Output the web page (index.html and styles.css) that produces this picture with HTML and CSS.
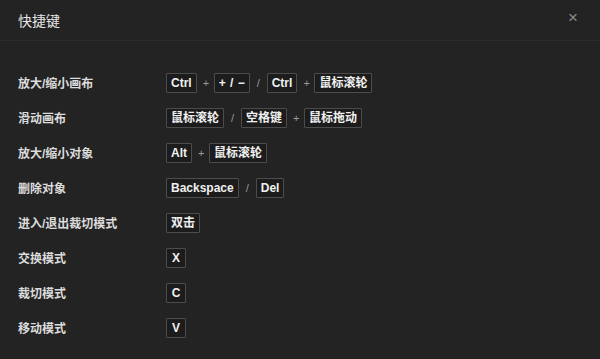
FILE: index.html
```html
<!DOCTYPE html>
<html lang="zh-CN">
<head>
  <meta charset="UTF-8" />
  <title>快捷键</title>
  <link rel="stylesheet" href="styles.css">
</head>
<body>
  <div class="dialog">
    <header>
      <h1>快捷键</h1>
      <span class="close">&#215;</span>
    </header>
    <main>
      <div class="row">
        <span class="label">放大/缩小画布</span>
        <div class="keys">
          <kbd>Ctrl</kbd><i>+</i><kbd class="wide">+ / −</kbd><i>/</i><kbd>Ctrl</kbd><i>+</i><kbd>鼠标滚轮</kbd>
        </div>
      </div>
      <div class="row">
        <span class="label">滑动画布</span>
        <div class="keys">
          <kbd>鼠标滚轮</kbd><i>/</i><kbd>空格键</kbd><i>+</i><kbd>鼠标拖动</kbd>
        </div>
      </div>
      <div class="row">
        <span class="label">放大/缩小对象</span>
        <div class="keys">
          <kbd>Alt</kbd><i>+</i><kbd>鼠标滚轮</kbd>
        </div>
      </div>
      <div class="row">
        <span class="label">删除对象</span>
        <div class="keys">
          <kbd>Backspace</kbd><i>/</i><kbd>Del</kbd>
        </div>
      </div>
      <div class="row">
        <span class="label">进入/退出裁切模式</span>
        <div class="keys"><kbd>双击</kbd></div>
      </div>
      <div class="row">
        <span class="label">交换模式</span>
        <div class="keys"><kbd>X</kbd></div>
      </div>
      <div class="row">
        <span class="label">裁切模式</span>
        <div class="keys"><kbd>C</kbd></div>
      </div>
      <div class="row">
        <span class="label">移动模式</span>
        <div class="keys"><kbd>V</kbd></div>
      </div>
    </main>
  </div>
</body>
</html>
```

FILE: styles.css
```css
body {
  margin: 0;
  background-color: #232323;
  color: #e2e2e2;
  font-family: "Liberation Sans", "Noto Sans CJK SC", sans-serif;
}
.dialog {
  width: 600px;
  height: 359px;
}
header {
  height: 40px;
  border-bottom: 1px solid #2c2c2c;
  display: flex;
  align-items: center;
  justify-content: space-between;
  padding: 0 22px 0 18px;
}
h1 {
  margin: 0;
  font-size: 14px;
  font-weight: normal;
  color: #e6e6e6;
}
.close {
  color: #8a8a8a;
  font-size: 17px;
  margin-top: -4px;
}
main {
  padding: 24px 18px 0;
}
.row {
  display: flex;
  align-items: center;
  height: 35px;
}
.label {
  width: 148px;
  font-size: 12px;
  color: #dcdcdc;
  font-weight: bold;
}
.keys {
  display: flex;
  align-items: center;
  gap: 6px;
}
kbd {
  font-family: "Liberation Sans", "Noto Sans CJK SC", sans-serif;
  font-size: 12px;
  font-weight: bold;
  line-height: 14px;
  min-width: 10px;
  text-align: center;
  padding: 2px 4px;
  border: 1px solid #4c4c4c;
  background-color: #1c1c1c;
  color: #f0f0f0;
  border-radius: 1px;
}
kbd.wide {
  word-spacing: 1px;
}
.keys i {
  font-style: normal;
  font-size: 11px;
  color: #9a9a9a;
  width: 5px;
  text-align: center;
}
```
